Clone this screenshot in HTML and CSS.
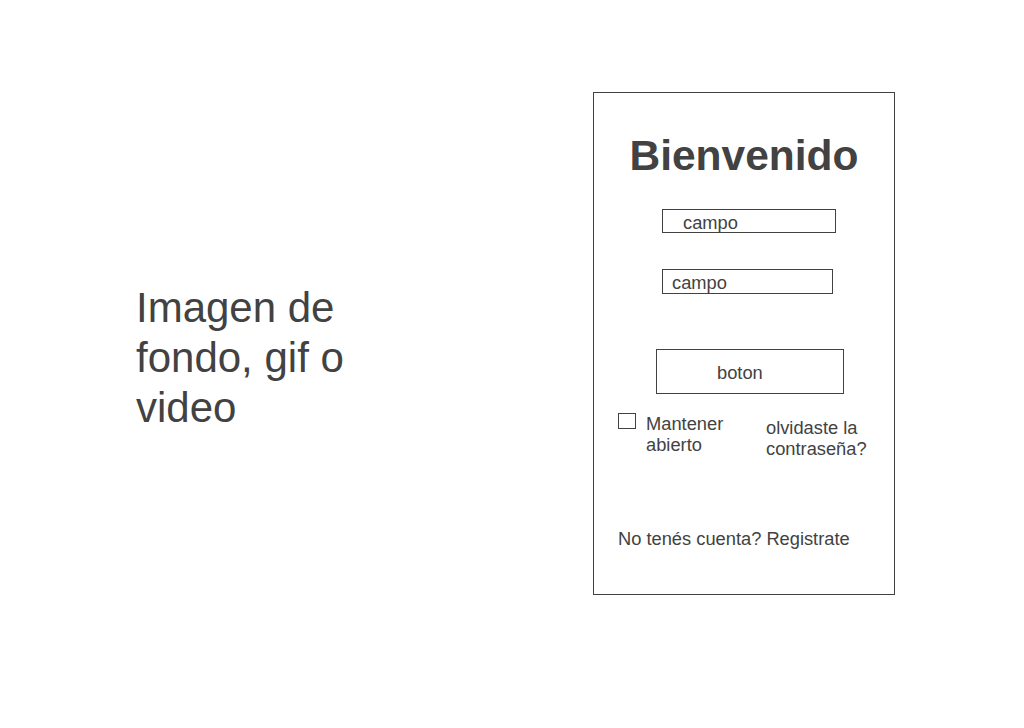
FILE: index.html
```html
<!DOCTYPE html>
<html lang="es">
<head>
<meta charset="utf-8">
<title>Login</title>
<link rel="stylesheet" href="styles.css">
</head>
<body>
<div class="page">
  <div class="hero">Imagen de fondo, gif o video</div>
  <div class="card">
    <h1 class="title">Bienvenido</h1>
    <div class="field field-1">campo</div>
    <div class="field field-2">campo</div>
    <div class="button">boton</div>
    <div class="options">
      <span class="checkbox"></span>
      <span class="keep">Mantener abierto</span>
      <span class="forgot">olvidaste la contraseña?</span>
    </div>
    <div class="register">No tenés cuenta? Registrate</div>
  </div>
</div>
</body>
</html>
```

FILE: styles.css
```css
* { box-sizing: border-box; }
html, body {
  margin: 0;
  padding: 0;
  background: #ffffff;
}
body {
  font-family: "Liberation Sans", Arial, sans-serif;
  color: #424242;
}
.page {
  display: flex;
  align-items: flex-start;
  padding: 92px 0 0 136px;
  width: 1024px;
  height: 728px;
}
.hero {
  width: 457px;
  padding-right: 227px;
  margin-top: 191px;
  font-size: 42px;
  line-height: 50px;
}
.card {
  width: 302px;
  height: 503px;
  border: 1px solid #424242;
  display: flex;
  flex-direction: column;
  align-items: flex-start;
}
.title {
  align-self: stretch;
  margin: 39px 0 0 0;
  font-size: 42.5px;
  line-height: 48px;
  font-weight: bold;
  text-align: center;
}
.field {
  font-size: 18.3px;
  border: 1px solid #424242;
  margin-left: 68px;
}
.field-1 {
  width: 174px;
  height: 24px;
  line-height: 25px;
  padding-left: 20px;
  margin-top: 29px;
}
.field-2 {
  width: 171px;
  height: 25px;
  line-height: 26px;
  padding-left: 9px;
  margin-top: 36px;
}
.button {
  width: 188px;
  height: 45px;
  border: 1px solid #424242;
  margin: 55px 0 0 62px;
  padding: 1px 0 0 60px;
  font-size: 18.3px;
  line-height: 44px;
}
.options {
  display: flex;
  align-items: flex-start;
  margin: 19px 0 0 24px;
  font-size: 18.3px;
  line-height: 21px;
}
.checkbox {
  width: 18px;
  height: 16px;
  border: 1px solid #424242;
  flex: none;
}
.keep {
  width: 110px;
  margin: 0 0 0 10px;
}
.forgot {
  width: 112px;
  margin: 4px 0 0 10px;
}
.register {
  margin: 69px 0 0 24px;
  font-size: 18.3px;
  line-height: 21px;
}
```
